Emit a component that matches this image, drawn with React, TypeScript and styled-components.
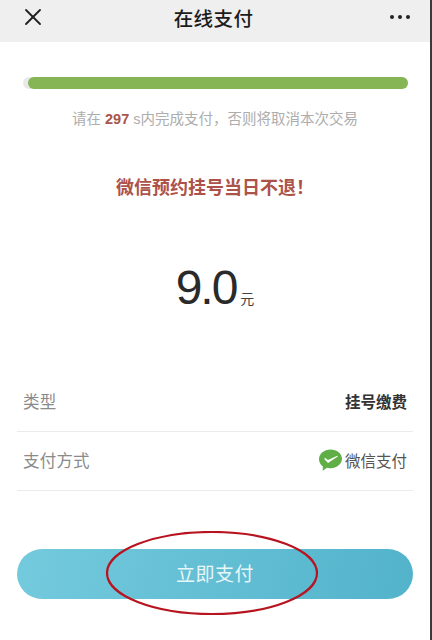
import styled, { createGlobalStyle } from "styled-components";
import { X } from "lucide-react";

const GlobalStyle = createGlobalStyle`
  html, body {
    margin: 0;
    padding: 0;
    background: #ffffff;
  }
  * {
    box-sizing: border-box;
  }
`;

const font = `"Liberation Sans", "Noto Sans CJK SC", sans-serif`;

const Page = styled.div`
  width: 432px;
  height: 640px;
  overflow: hidden;
  background: #fff;
  border-right: 2px solid #3a3a3a;
  font-family: ${font};
  display: flex;
  flex-direction: column;
`;

const Header = styled.header`
  height: 42px;
  flex: none;
  background: #efefef;
  display: flex;
  align-items: center;
  justify-content: space-between;
  padding: 0 20px 8px 19px;
`;

const Title = styled.h1`
  margin: 0 0 0 -10px;
  font-size: 19.5px;
  font-weight: 500;
  color: #1c1c1c;
  letter-spacing: 0.4px;
`;

const Dots = styled.div`
  display: flex;
  gap: 4px;
`;

const Dot = styled.span`
  width: 4px;
  height: 4px;
  border-radius: 50%;
  background: #222;
`;

const Track = styled.div`
  margin: 35px 22px 0 23px;
  height: 12px;
  border-radius: 6px;
  background: #e9e9e9;
  padding-left: 5px;
`;

const Fill = styled.div`
  height: 100%;
  border-radius: 6px;
  background: #86b555;
`;

const Countdown = styled.p`
  margin: 20px 0 0;
  height: 20px;
  line-height: 20px;
  text-align: center;
  font-size: 14.5px;
  color: #adadad;
`;

const Seconds = styled.strong`
  color: #a9544c;
`;

const Warning = styled.p`
  margin: 47px 0 0;
  height: 24px;
  line-height: 24px;
  text-align: center;
  font-size: 18px;
  font-weight: 700;
  color: #ad5248;
`;

const Amount = styled.div`
  margin-top: 57px;
  height: 62px;
  display: flex;
  align-items: baseline;
  justify-content: center;
  gap: 4px;
  color: #2a2a2a;
  line-height: 62px;
`;

const Value = styled.span`
  font-size: 48px;
  letter-spacing: -2px;
`;

const Unit = styled.span`
  font-size: 14px;
  color: #444;
`;

const List = styled.div`
  margin: 54px 17px 0;
`;

const Row = styled.div`
  height: 59px;
  padding: 0 6px 2px;
  display: flex;
  align-items: center;
  justify-content: space-between;
  border-bottom: 1px solid #ebebeb;
`;

const Label = styled.span`
  font-size: 16.5px;
  color: #8a8a8a;
  letter-spacing: 0.2px;
`;

const Detail = styled.span<{ $strong?: boolean }>`
  display: flex;
  align-items: center;
  gap: 3px;
  font-size: 15.5px;
  font-weight: ${(props) => (props.$strong ? 700 : 400)};
  color: ${(props) => (props.$strong ? "#333" : "#555")};
`;

const ButtonWrap = styled.div`
  position: relative;
  margin: 58px 17px 0;
`;

const PayButton = styled.button`
  display: block;
  width: 100%;
  height: 50px;
  padding: 0 0 3px;
  border: 0;
  border-radius: 25px;
  background: linear-gradient(100deg, #74cadd 0%, #52b3cb 100%);
  color: #e9f6f8;
  font-family: ${font};
  font-size: 19px;
  letter-spacing: 0.5px;
`;

const Oval = styled.svg`
  position: absolute;
  left: 89px;
  top: -18px;
  width: 214px;
  height: 86px;
  pointer-events: none;
`;

function WechatPayIcon() {
  return (
    <svg width="24" height="24" viewBox="0 0 24 24">
      <path
        d="M12.5 1.5C6.1 1.5 1 5.8 1 11.2c0 2.9 1.5 5.500 3.900 7.300l-.3 4.300 4.400-3a13.500 13.500 0 0 0 3.500.4C18.900 20.200 24 15.900 24 10.800S18.900 1.500 12.500 1.500z"
        fill="#5fae46"
      />
      <path
        d="M6 10.800l1.200-.8 2.800 2.100 9.300-4.300.5.700-9.800 6.600z"
        fill="#fff"
      />
    </svg>
  );
}

export default function App() {
  return (
    <>
      <GlobalStyle />
      <Page>
        <Header>
          <X size={28} strokeWidth={1.6} color="#222" />
          <Title>在线支付</Title>
          <Dots>
            <Dot />
            <Dot />
            <Dot />
          </Dots>
        </Header>

        <Track>
          <Fill />
        </Track>

        <Countdown>
          请在 <Seconds>297</Seconds> s内完成支付，否则将取消本次交易
        </Countdown>

        <Warning>微信预约挂号当日不退！</Warning>

        <Amount>
          <Value>9.0</Value>
          <Unit>元</Unit>
        </Amount>

        <List>
          <Row>
            <Label>类型</Label>
            <Detail $strong>挂号缴费</Detail>
          </Row>
          <Row>
            <Label>支付方式</Label>
            <Detail>
              <WechatPayIcon />
              微信支付
            </Detail>
          </Row>
        </List>

        <ButtonWrap>
          <PayButton>立即支付</PayButton>
          <Oval viewBox="0 0 214 86">
            <ellipse
              cx="106"
              cy="42"
              rx="105"
              ry="41"
              fill="none"
              stroke="#b8141f"
              strokeWidth="2.2"
            />
          </Oval>
        </ButtonWrap>
      </Page>
    </>
  );
}
